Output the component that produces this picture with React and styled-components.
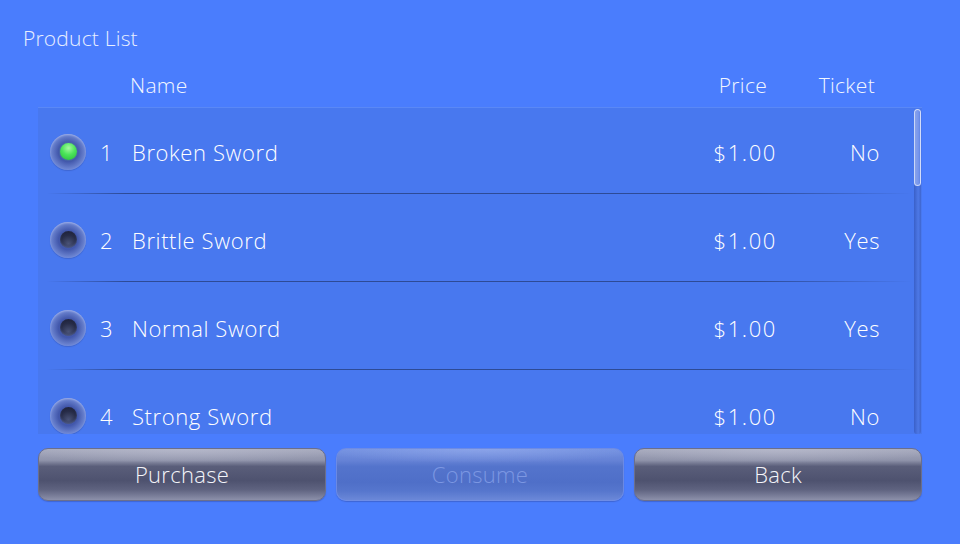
import React from 'react'
import styled, { createGlobalStyle } from 'styled-components'

const GlobalStyle = createGlobalStyle`
  body {
    margin: 0;
    background: #4a7dfd;
    font-family: "Open Sans", "Liberation Sans", sans-serif;
  }
`;

const Screen = styled.div`
  width: 960px;
  height: 544px;
  background: #4a7dfd;
  color: #fff;
  font-weight: 350;
  overflow: hidden;
  display: flex;
  flex-direction: column;
`;

const Title = styled.div`
  padding: 26px 23px 13px;
  line-height: 24px;
  font-size: 21px;
  letter-spacing: 0.2px;
  color: #e8efff;
`;

const columns = `
  display: grid;
  grid-template-columns: 50px 32px 1fr 120px 103px;
  padding: 0 32px 0 12px;
  align-items: center;
`;

const HeaderRow = styled.div`
  ${columns}
  margin: 0 48px 0 38px;
  height: 44px;
  font-size: 21px;
  letter-spacing: 0.3px;
  color: #f2f6ff;
`;

const HeaderCell = styled.div`
  grid-column: ${p => p.col};
  text-align: ${p => p.align || 'left'};
  padding-right: ${p => p.pr || 0}px;
  margin-left: ${p => p.ml || 0}px;
`;

const ListFrame = styled.div`
  margin: 0 38px;
  height: 327px;
  display: flex;
  background: #4878ef;
  box-shadow: inset 0 1px 0 #5a88f6;
`;

const List = styled.div`
  flex: 1;
  overflow: hidden;
`;

const Row = styled.div`
  ${columns}
  position: relative;
  height: 88px;
  padding-top: 1px;
  box-sizing: border-box;
  font-size: 22px;
  letter-spacing: 0.6px;

  &::after {
    content: "";
    position: absolute;
    left: 0;
    right: 0;
    bottom: 1px;
    height: 1px;
    background: linear-gradient(90deg, rgba(44,72,145,0) 1%, rgba(44,72,145,0.95) 10%, rgba(44,72,145,0.95) 82%, rgba(44,72,145,0) 100%);
  }
`;

const Radio = styled.div`
  width: 36px;
  height: 36px;
  border-radius: 50%;
  display: flex;
  align-items: center;
  justify-content: center;
  background: radial-gradient(circle at 50% 50%, rgba(66,86,168,0.95) 38%, rgba(130,142,196,0.65) 68%, rgba(110,130,205,0.5) 100%);
  box-shadow: inset 0 1px 2px rgba(220,225,255,0.45), 0 1px 1px rgba(40,60,140,0.3);
`;

const Dot = styled.div`
  width: 17px;
  height: 17px;
  border-radius: 50%;
  background: ${p => p.on
    ? 'radial-gradient(circle at 50% 30%, #a6f7a0 0%, #4ce45a 45%, #27b83a 100%)'
    : 'radial-gradient(circle at 50% 75%, #4a5378 0%, #272c48 55%, #1a1d33 100%)'};
  box-shadow: ${p => p.on ? '0 0 2px rgba(120,255,120,0.4)' : 'inset 0 -1px 2px rgba(100,120,180,0.5)'};
`;

const Num = styled.div``;

const Name = styled.div``;

const Price = styled.div`
  text-align: right;
  letter-spacing: 1.6px;
`;

const Ticket = styled.div`
  text-align: right;
`;

const Track = styled.div`
  width: 10px;
  display: flex;
  justify-content: center;
  padding-top: 2px;
`;

const TrackLine = styled.div`
  width: 7px;
  height: 100%;
  border-radius: 3px;
  background: linear-gradient(90deg, #3a60c8, #4d78e6 60%, #3f66cf);
  position: relative;
`;

const Thumb = styled.div`
  position: absolute;
  top: 0;
  left: 0;
  width: 7px;
  height: 77px;
  box-sizing: border-box;
  border-radius: 4px;
  border: 1px solid rgba(230,236,255,0.8);
  background: linear-gradient(90deg, rgba(200,212,255,0.55), rgba(140,165,240,0.45));
`;

const ButtonBar = styled.div`
  display: flex;
  gap: 10px;
  margin: 14px 38px 0;
`;

const Button = styled.button`
  flex: 1;
  height: 53px;
  border-radius: 10px;
  font-family: inherit;
  font-weight: 350;
  font-size: 22px;
  letter-spacing: 0.3px;
  padding: 0 0 2px;
  cursor: pointer;
  border: 1px solid ${p => p.disabled ? 'rgba(110,140,230,0.9)' : '#6b6f8c'};
  color: ${p => p.disabled ? '#7c97e2' : '#f4f5fa'};
  background: ${p => p.disabled
    ? 'radial-gradient(ellipse 60% 14px at 50% 0%, rgba(160,180,240,0.55), rgba(160,180,240,0) 100%), linear-gradient(180deg, #7290e0 0%, #6683d6 22%, #5474cc 34%, #4f6fc8 65%, #5676cd 82%, #6b88d8 100%)'
    : 'radial-gradient(ellipse 60% 14px at 50% 0%, rgba(190,192,210,0.6), rgba(190,192,210,0) 100%), linear-gradient(180deg, #a7aabd 0%, #9094ab 22%, #5a5e7a 34%, #4e526f 62%, #5f6380 80%, #8c90aa 100%)'};
  box-shadow: 0 1px 1px rgba(40,60,140,0.35);
`;

const products = [
  { id: 1, name: 'Broken Sword', price: '$1.00', ticket: 'No', on: true },
  { id: 2, name: 'Brittle Sword', price: '$1.00', ticket: 'Yes' },
  { id: 3, name: 'Normal Sword', price: '$1.00', ticket: 'Yes' },
  { id: 4, name: 'Strong Sword', price: '$1.00', ticket: 'No' },
];

export default function App() {
  return (
    <Screen>
      <GlobalStyle />
      <Title>Product List</Title>
      <HeaderRow>
        <HeaderCell col="3" ml={-2}>Name</HeaderCell>
        <HeaderCell col="4" align="right" pr={10}>Price</HeaderCell>
        <HeaderCell col="5" align="right" pr={5}>Ticket</HeaderCell>
      </HeaderRow>
      <ListFrame>
        <List>
          {products.map(p => (
            <Row key={p.id}>
              <Radio><Dot on={p.on} /></Radio>
              <Num>{p.id}</Num>
              <Name>{p.name}</Name>
              <Price>{p.price}</Price>
              <Ticket>{p.ticket}</Ticket>
            </Row>
          ))}
        </List>
        <Track>
          <TrackLine>
            <Thumb />
          </TrackLine>
        </Track>
      </ListFrame>
      <ButtonBar>
        <Button>Purchase</Button>
        <Button disabled>Consume</Button>
        <Button>Back</Button>
      </ButtonBar>
    </Screen>
  )
}
